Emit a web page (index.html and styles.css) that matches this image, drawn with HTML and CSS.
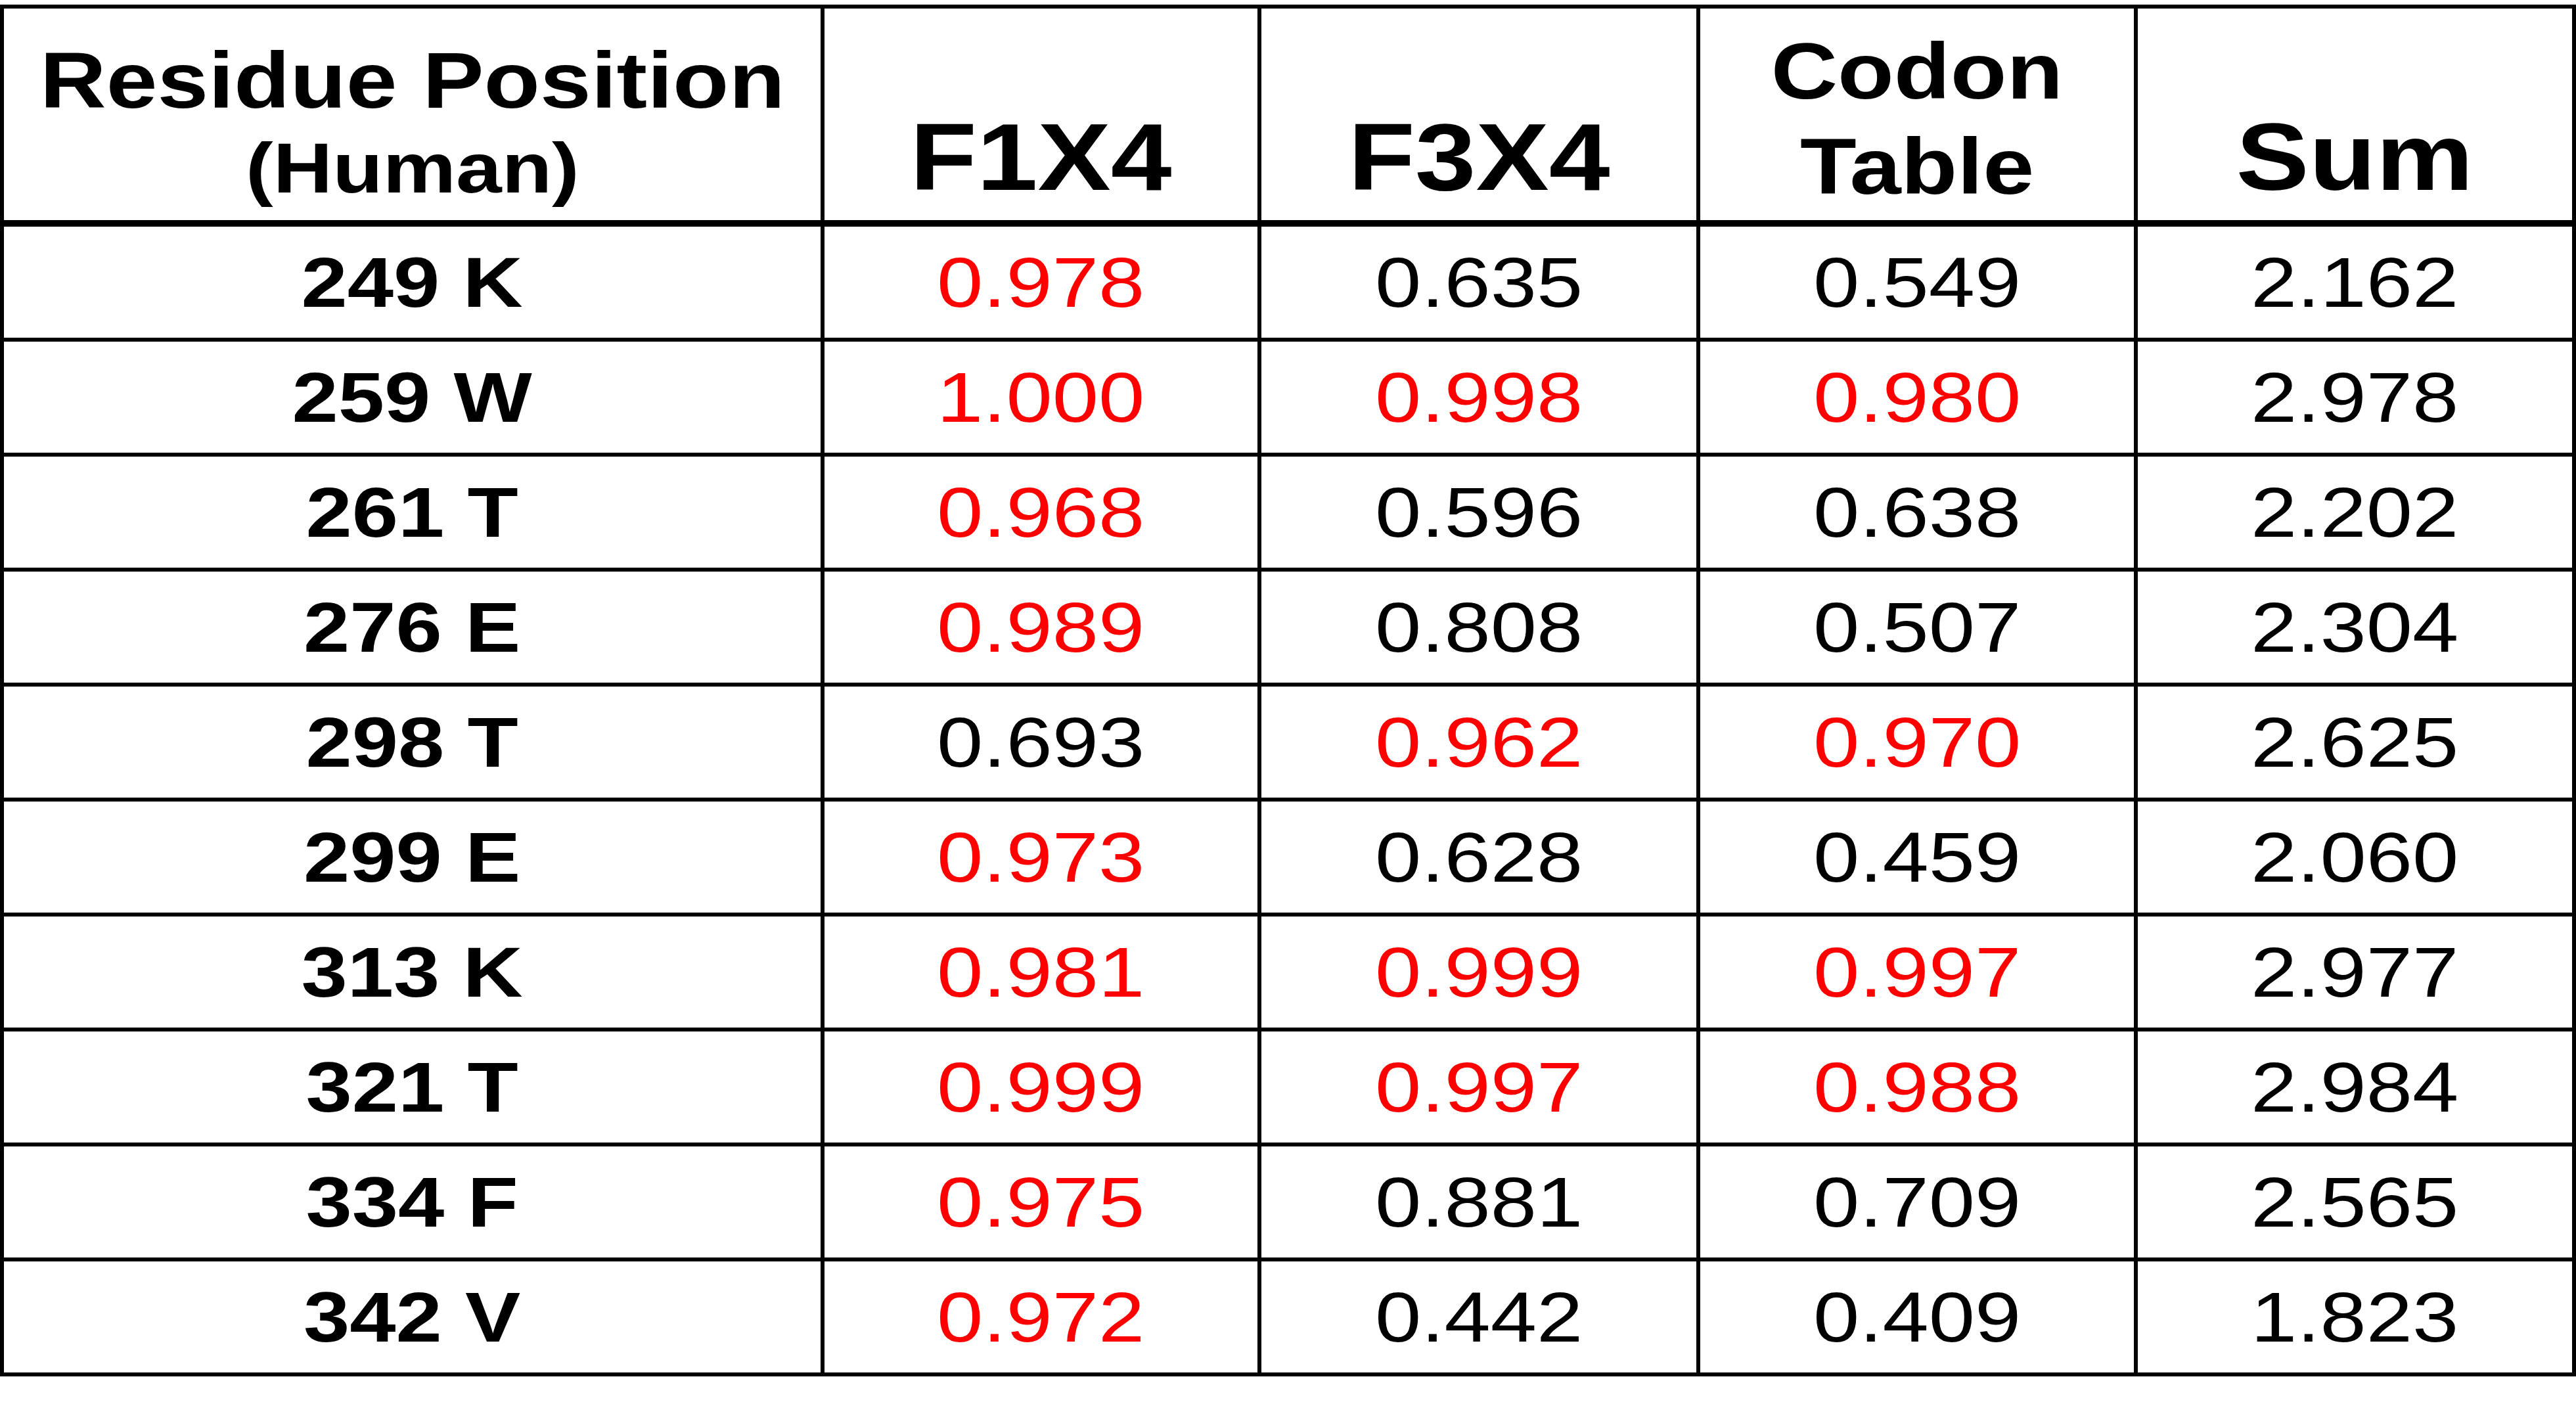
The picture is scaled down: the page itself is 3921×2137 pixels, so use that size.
FILE: index.html
```html
<!DOCTYPE html>
<html lang="en">
<head>
<meta charset="utf-8">
<title>Residue Position Table</title>
<link rel="stylesheet" href="styles.css">
</head>
<body>
<div class="grid" role="table">
  <div class="cell head" role="columnheader"><span class="txt h-main">Residue Position</span><span class="txt h-sub">(Human)</span></div>
  <div class="cell head" role="columnheader"><span class="txt h-big">F1X4</span></div>
  <div class="cell head" role="columnheader"><span class="txt h-big">F3X4</span></div>
  <div class="cell head" role="columnheader"><span class="txt h-two">Codon</span><span class="txt h-two">Table</span></div>
  <div class="cell head" role="columnheader"><span class="txt h-big">Sum</span></div>

  <div class="cell label"><span class="txt">249 K</span></div>
  <div class="cell"><span class="txt hi">0.978</span></div>
  <div class="cell"><span class="txt">0.635</span></div>
  <div class="cell"><span class="txt">0.549</span></div>
  <div class="cell"><span class="txt">2.162</span></div>

  <div class="cell label"><span class="txt">259 W</span></div>
  <div class="cell"><span class="txt hi">1.000</span></div>
  <div class="cell"><span class="txt hi">0.998</span></div>
  <div class="cell"><span class="txt hi">0.980</span></div>
  <div class="cell"><span class="txt">2.978</span></div>

  <div class="cell label"><span class="txt">261 T</span></div>
  <div class="cell"><span class="txt hi">0.968</span></div>
  <div class="cell"><span class="txt">0.596</span></div>
  <div class="cell"><span class="txt">0.638</span></div>
  <div class="cell"><span class="txt">2.202</span></div>

  <div class="cell label"><span class="txt">276 E</span></div>
  <div class="cell"><span class="txt hi">0.989</span></div>
  <div class="cell"><span class="txt">0.808</span></div>
  <div class="cell"><span class="txt">0.507</span></div>
  <div class="cell"><span class="txt">2.304</span></div>

  <div class="cell label"><span class="txt">298 T</span></div>
  <div class="cell"><span class="txt">0.693</span></div>
  <div class="cell"><span class="txt hi">0.962</span></div>
  <div class="cell"><span class="txt hi">0.970</span></div>
  <div class="cell"><span class="txt">2.625</span></div>

  <div class="cell label"><span class="txt">299 E</span></div>
  <div class="cell"><span class="txt hi">0.973</span></div>
  <div class="cell"><span class="txt">0.628</span></div>
  <div class="cell"><span class="txt">0.459</span></div>
  <div class="cell"><span class="txt">2.060</span></div>

  <div class="cell label"><span class="txt">313 K</span></div>
  <div class="cell"><span class="txt hi">0.981</span></div>
  <div class="cell"><span class="txt hi">0.999</span></div>
  <div class="cell"><span class="txt hi">0.997</span></div>
  <div class="cell"><span class="txt">2.977</span></div>

  <div class="cell label"><span class="txt">321 T</span></div>
  <div class="cell"><span class="txt hi">0.999</span></div>
  <div class="cell"><span class="txt hi">0.997</span></div>
  <div class="cell"><span class="txt hi">0.988</span></div>
  <div class="cell"><span class="txt">2.984</span></div>

  <div class="cell label"><span class="txt">334 F</span></div>
  <div class="cell"><span class="txt hi">0.975</span></div>
  <div class="cell"><span class="txt">0.881</span></div>
  <div class="cell"><span class="txt">0.709</span></div>
  <div class="cell"><span class="txt">2.565</span></div>

  <div class="cell label"><span class="txt">342 V</span></div>
  <div class="cell"><span class="txt hi">0.972</span></div>
  <div class="cell"><span class="txt">0.442</span></div>
  <div class="cell"><span class="txt">0.409</span></div>
  <div class="cell"><span class="txt">1.823</span></div>
</div>
</body>
</html>
```
FILE: styles.css
```css
html, body {
  margin: 0;
  padding: 0;
  background: #ffffff;
}

body {
  padding-top: 7px;
  font-family: "Liberation Sans", Arial, sans-serif;
  color: #000000;
}

.grid {
  box-sizing: border-box;
  width: 3921px;
  display: grid;
  grid-template-columns: 1249px 665px 668px 666px 667px;
  grid-template-rows: 332px repeat(10, 175px);
  border-top: 6px solid #000;
  border-left: 6px solid #000;
}

.cell {
  box-sizing: border-box;
  border-right: 6px solid #000;
  border-bottom: 6px solid #000;
  display: flex;
  align-items: center;
  justify-content: center;
  text-align: center;
  font-size: 108px;
  line-height: 1.2;
  overflow: hidden;
}

.txt {
  display: inline-block;
  transform: scaleX(1.17);
  transform-origin: center;
  white-space: nowrap;
}

.label {
  font-weight: 700;
}

.hi {
  color: #ff0000;
}

.head {
  border-bottom-width: 10px;
  flex-direction: column;
  justify-content: flex-end;
  padding-bottom: 9px;
  font-weight: 700;
}

.h-main {
  font-size: 120px;
  line-height: 127px;
  transform: scaleX(1.165);
}

.h-sub {
  font-size: 107px;
  line-height: 140px;
}

.h-big {
  font-size: 145px;
  line-height: 174px;
  transform: scaleX(1.15);
}

.h-two {
  font-size: 120px;
  line-height: 145px;
}
```
